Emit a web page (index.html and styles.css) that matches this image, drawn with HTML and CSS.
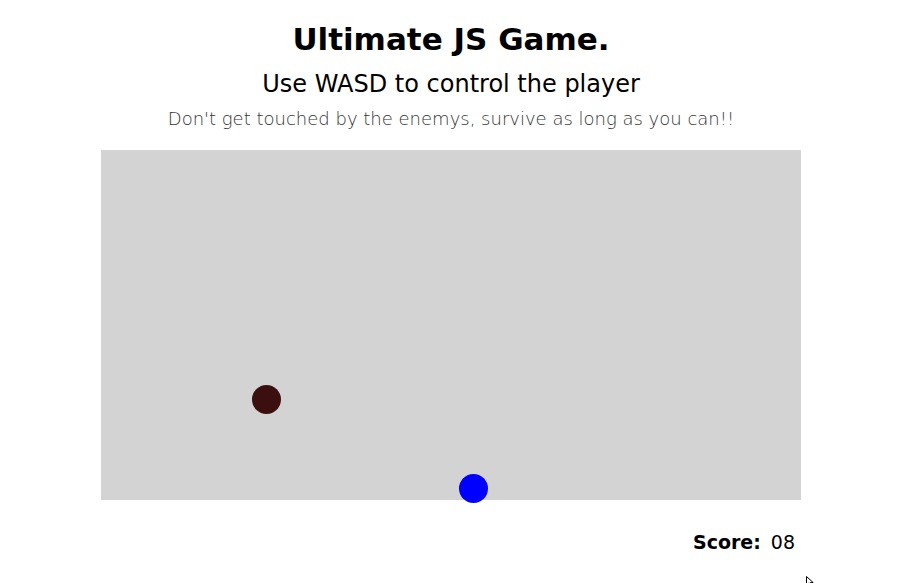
FILE: index.html
```html
<!DOCTYPE html>
<html>
<head>
<meta charset="utf-8">
<link rel="stylesheet" href="styles.css">
</head>
<body>
<main class="page">
  <h1 class="title">Ultimate JS Game.</h1>
  <h2 class="subtitle">Use WASD to control the player</h2>
  <p class="hint">Don't get touched by the enemys, survive as long as you can!!</p>
  <div class="board">
    <span class="ball enemy" style="left:151px; top:235px"></span>
    <span class="ball player" style="left:358px; top:324px"></span>
  </div>
  <div class="score-row">
    <span class="score-label">Score:</span>
    <span class="score-value">08</span>
  </div>
</main>
<svg class="cursor" width="10" height="12" viewBox="0 0 10 12"><path d="M0.5 0.5 L0.5 9 L2.8 7 L4.5 10.5 L5.8 9.9 L4.2 6.6 L7.2 6.6 Z" fill="#fff" stroke="#000" stroke-width="1"/></svg>
</body>
</html>
```
FILE: styles.css
```css
html, body {
  margin: 0;
  padding: 0;
  background: #fff;
}
body {
  font-family: "DejaVu Sans", "Open Sans", sans-serif;
  color: #000;
  overflow: hidden;
  height: 583px;
}
.page {
  width: 902px;
  display: flex;
  flex-direction: column;
  align-items: center;
  text-align: center;
}
.title {
  margin: 19px 0 0;
  font-size: 31px;
  font-weight: 900;
  line-height: 40px;
}
.subtitle {
  margin: 10px 0 0;
  font-size: 24px;
  font-weight: 400;
  line-height: 30px;
}
.hint {
  margin: 8px 0 0;
  font-size: 18px;
  font-weight: 300;
  color: #333;
  line-height: 24px;
}
.board {
  position: relative;
  width: 700px;
  height: 350px;
  margin-top: 19px;
  background: #d3d3d3;
}
.ball {
  position: absolute;
  width: 29px;
  height: 29px;
  border-radius: 50%;
}
.enemy { background: #3b0f10; }
.player { background: #0000ff; }
.score-row {
  width: 700px;
  display: flex;
  justify-content: flex-end;
  align-items: baseline;
  gap: 10px;
  margin-top: 31px;
  padding-right: 6px;
  box-sizing: border-box;
  font-size: 19px;
}
.score-label { font-weight: 900; }
.score-value { font-weight: 400; }
.cursor {
  position: absolute;
  left: 806px;
  top: 576px;
}
```
